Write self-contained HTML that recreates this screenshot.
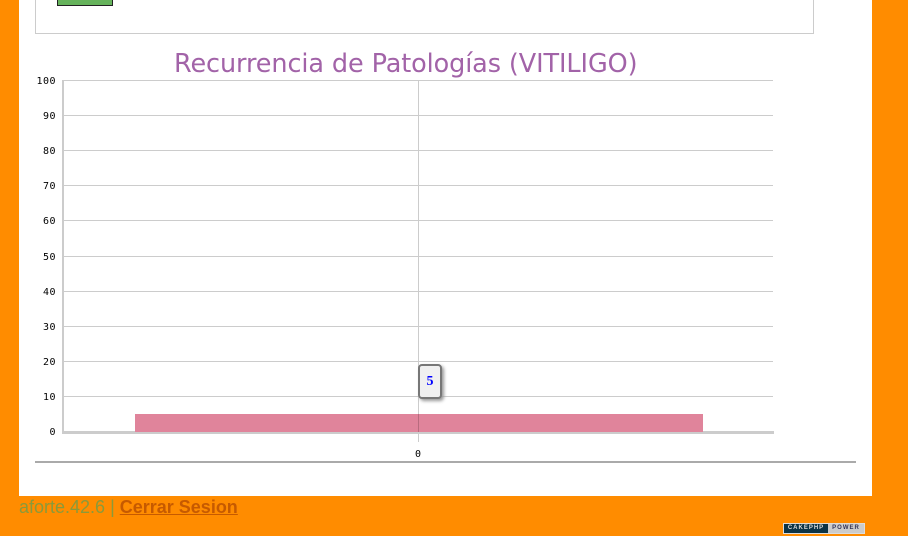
<!DOCTYPE html>
<html><head><style>
body{margin:0;width:908px;height:536px;background:#FF8C00;position:relative;overflow:hidden;font-family:"Liberation Sans",sans-serif}
.a{position:absolute}
.g{position:absolute;left:62px;width:711px;height:1px;background:#ccc}
.l{position:absolute;left:20px;width:36px;text-align:right;font-size:10px;font-family:"DejaVu Sans Mono","Liberation Mono",monospace;color:#000;line-height:10px;letter-spacing:0.5px}
</style></head><body>
<div class="a" style="left:19px;top:0;width:853px;height:496px;background:#fff"></div>
<div class="a" style="left:35px;top:-2px;width:777px;height:35px;border:1px solid #ccc;border-top:none"></div>
<div class="a" style="left:57px;top:-2px;width:54px;height:6px;background:#66b35c;border:1px solid #222"></div>
<div class="a" style="left:174px;top:49px;font-size:25.5px;color:#a263a8;font-family:'DejaVu Sans',sans-serif;white-space:nowrap;letter-spacing:-0.1px">Recurrencia de Patologías (VITILIGO)</div>

<div class="g" style="top:80px"></div><div class="g" style="top:115px"></div><div class="g" style="top:150px"></div>
<div class="g" style="top:185px"></div><div class="g" style="top:220px"></div><div class="g" style="top:256px"></div>
<div class="g" style="top:291px"></div><div class="g" style="top:326px"></div><div class="g" style="top:361px"></div>
<div class="g" style="top:396px"></div>
<div class="a" style="left:418px;top:80px;width:1px;height:362px;background:#ccc"></div>
<div class="a" style="left:62px;top:80px;width:2px;height:352px;background:#ccc"></div>
<div class="a" style="left:62px;top:431px;width:712px;height:3px;background:#ccc"></div>
<div class="a" style="left:135px;top:414px;width:568px;height:18px;background:#e0849b"></div>
<div class="a" style="left:418px;top:414px;width:1px;height:18px;background:#b86b7e"></div>

<div class="l" style="top:77px">100</div><div class="l" style="top:112px">90</div><div class="l" style="top:147px">80</div>
<div class="l" style="top:182px">70</div><div class="l" style="top:217px">60</div><div class="l" style="top:253px">50</div>
<div class="l" style="top:288px">40</div><div class="l" style="top:323px">30</div><div class="l" style="top:358px">20</div>
<div class="l" style="top:393px">10</div><div class="l" style="top:428px">0</div>
<div class="a" style="left:415px;top:449px;font-size:10px;font-family:'DejaVu Sans Mono',monospace">0</div>

<div class="a" style="left:418px;top:364px;width:20px;height:31px;background:#f0f0f0;border:2px solid #777;border-radius:4px;box-shadow:2px 2px 3px #999;text-align:center;line-height:31px;color:#00f;font-weight:bold;font-size:14px;font-family:'Liberation Serif',serif">5</div>

<div class="a" style="left:35px;top:461px;width:821px;height:2px;background:#aaa"></div>

<div class="a" style="left:19px;top:497px;font-size:18px;color:#8a9a3a;white-space:nowrap">aforte.42.6 | <b style="color:#c65a00;text-decoration:underline">Cerrar Sesion</b></div>
<div class="a" style="left:783px;top:523px;width:80px;height:9px;border:1px solid #ddd;background:#ccc;display:flex;font-size:6px;font-weight:bold;letter-spacing:1px;line-height:9px">
<div style="width:44px;background:#0b3345;color:#ddd;text-align:center">CAKEPHP</div><div style="flex:1;color:#335;text-align:center">POWER</div></div>
</body></html>
